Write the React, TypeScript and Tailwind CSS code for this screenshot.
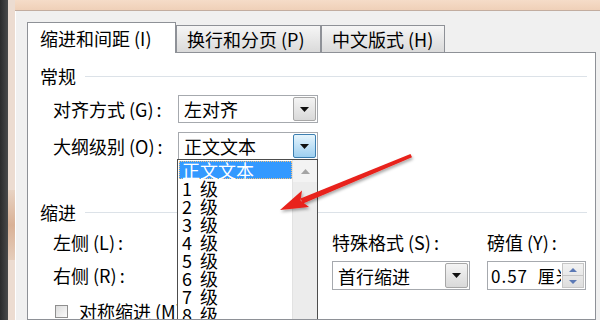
import type { ReactNode } from "react"

const FONT = "font-['Noto_Sans_CJK_SC','Noto_Sans',sans-serif]"

function Hot({ text, k, colon = true }: { text: string; k: string; colon?: boolean }) {
  return (
    <span className="whitespace-nowrap">
      {text}
      <span className="ml-[4px]">({k})</span>
      {colon && <span className="ml-[3px]">:</span>}
    </span>
  )
}

function Arrow({ focus = false }: { focus?: boolean }) {
  return (
    <div
      className={
        focus
          ? "m-px flex w-[23px] items-center justify-center rounded-[2px] border border-[#3c7fb1] bg-gradient-to-b from-[#e5f4fc] to-[#9dcff0]"
          : "m-px flex w-[23px] items-center justify-center rounded-[2px] border border-[#a7a7a7] bg-gradient-to-b from-[#f4f4f4] to-[#d9d9d9]"
      }
    >
      <svg width="9" height="5" viewBox="0 0 9 5">
        <path d="M0 0h9L4.5 5z" fill="#111" />
      </svg>
    </div>
  )
}

function Select({ value, w, focus }: { value: string; w: string; focus?: boolean }) {
  return (
    <div className={`flex h-[28px] ${w} border border-[#a6a9ae] bg-white`}>
      <div className="flex flex-1 items-center pl-[5px] text-[18px] leading-none">{value}</div>
      <Arrow focus={focus} />
    </div>
  )
}

function Group({ title, className = "" }: { title: string; className?: string }) {
  return (
    <div className={`flex h-[24px] items-center pl-[12px] pr-[8px] ${className}`}>
      <span className="text-[18px] leading-none">{title}</span>
      <div className="ml-[9px] h-px flex-1 bg-[#dce2e8]" />
    </div>
  )
}

function Tab({ children, active, w }: { children: ReactNode; active?: boolean; w: string }) {
  return (
    <div
      className={
        active
          ? `relative z-10 -mb-px flex h-[31px] ${w} items-center border border-b-0 border-[#8e9197] bg-white pl-[12px] text-[18px]`
          : `flex h-[27px] ${w} items-center border border-b-0 border-[#8e9197] bg-gradient-to-b from-[#f6f6f6] to-[#dadada] pl-[10px] text-[18px]`
      }
    >
      {children}
    </div>
  )
}

const LEVELS = ["1", "2", "3", "4", "5", "6", "7", "8", "9"]

export default function App() {
  return (
    <div className={`relative flex h-[320px] w-[600px] overflow-hidden bg-[#ecdcd0] text-black ${FONT}`}>
      {/* desktop edge */}
      <div className="w-[8px] shrink-0 bg-gradient-to-r from-[#2b2b2b] to-[#4a4a4a]" />
      <div className="flex w-[7px] shrink-0 flex-col bg-[#ecdcd1]">
        <div className="h-[190px] shrink-0" />
        <div className="h-[70px] shrink-0 bg-gradient-to-b from-[#e8d3c3] via-[#d9b196] to-[#e5cdbb]" />
      </div>

      <div className="flex min-h-0 flex-1 flex-col">
        <div className="h-[11px] shrink-0 border-b border-[#c2ada0] bg-gradient-to-b from-[#f5dcc8] to-[#efd0b8]" />

        {/* dialog */}
        <div className="flex min-h-0 flex-1 flex-col border-l border-white bg-[#f0f0f0] pl-[11px] pr-[4px] pt-[11px]">
          <div className="flex h-[30px] shrink-0 items-end">
            <Tab active w="w-[149px]">
              <Hot text="缩进和间距" k="I" colon={false} />
            </Tab>
            <Tab w="w-[145px]">
              <Hot text="换行和分页" k="P" colon={false} />
            </Tab>
            <Tab w="w-[124px]">
              <Hot text="中文版式" k="H" colon={false} />
            </Tab>
          </div>

          <div className="relative min-h-0 flex-1 overflow-hidden border border-[#8e9197] bg-white">
            <Group title="常规" className="mt-[11px]" />

            <div className="mt-[7px] flex items-center pl-[25px]">
              <div className="w-[125px] text-[18px] leading-none">
                <Hot text="对齐方式" k="G" />
              </div>
              <Select value="左对齐" w="w-[140px]" />
            </div>
            <div className="mt-[9px] flex items-center pl-[25px]">
              <div className="w-[125px] text-[18px] leading-none">
                <Hot text="大纲级别" k="O" />
              </div>
              <Select value="正文文本" w="w-[140px]" focus />
            </div>

            <Group title="缩进" className="mt-[40px]" />

            <div className="flex">
              <div className="flex w-[304px] flex-col pl-[25px] text-[18px] leading-none">
                <div className="mt-[6px] flex h-[24px] items-center">
                  <Hot text="左侧" k="L" />
                </div>
                <div className="mt-[9px] flex h-[24px] items-center">
                  <Hot text="右侧" k="R" />
                </div>
                <div className="mt-[14px] flex h-[20px] items-center">
                  <div className="ml-[2px] h-[13px] w-[13px] border border-[#8f8f8f] bg-gradient-to-br from-[#dcdcdc] to-[#fbfbfb]" />
                  <span className="ml-[11px]">
                    <Hot text="对称缩进" k="M" colon={false} />
                  </span>
                </div>
              </div>

              <div className="flex gap-[17px] text-[18px] leading-none">
                <div className="flex w-[138px] flex-col">
                  <div className="mt-[6px] flex h-[24px] items-center">
                    <Hot text="特殊格式" k="S" />
                  </div>
                  <div className="mt-[7px]">
                    <Select value="首行缩进" w="w-[138px] h-[29px]" />
                  </div>
                </div>
                <div className="flex w-[99px] flex-col">
                  <div className="mt-[6px] flex h-[24px] items-center">
                    <Hot text="磅值" k="Y" />
                  </div>
                  <div className="mt-[7px] flex h-[29px] border border-[#a6a9ae] bg-white">
                    <div className="flex w-0 flex-1 items-center overflow-hidden whitespace-nowrap pl-[3px] text-[17px] tracking-[1px]">
                      0.57&nbsp;&nbsp;厘米
                    </div>
                    <div className="m-px flex w-[22px] flex-col border border-[#c6c6c6] bg-gradient-to-b from-[#f2f2f2] to-[#dedede]">
                      <div className="flex flex-1 items-center justify-center border-b border-[#c6c6c6]">
                        <svg width="8" height="4" viewBox="0 0 8 4">
                          <path d="M0 4h8L4 0z" fill="#5b79b5" />
                        </svg>
                      </div>
                      <div className="flex flex-1 items-center justify-center">
                        <svg width="8" height="4" viewBox="0 0 8 4">
                          <path d="M0 0h8L4 4z" fill="#5b79b5" />
                        </svg>
                      </div>
                    </div>
                  </div>
                </div>
              </div>
            </div>

            {/* open dropdown list */}
            <div className="absolute left-[149px] top-[106px] z-20 flex h-[200px] w-[141px] border border-[#4d4d4d] bg-white text-[18px] leading-none">
              <div className="flex flex-1 flex-col pl-px pt-px">
                <div className="flex h-[18px] items-center border border-dotted border-[#f0c080] bg-[#3399ff] pl-[2px] text-white">
                  正文文本
                </div>
                {LEVELS.map((n) => (
                  <div key={n} className="flex h-[18px] items-center pl-[3px]">
                    <span className="w-[18px]">{n}</span>
                    <span>级</span>
                  </div>
                ))}
              </div>
              <div className="flex w-[25px] flex-col border-l border-[#e2e2e2] bg-[#ececec]">
                <div className="flex h-[22px] items-center justify-center bg-[#f3f3f3]">
                  <svg width="9" height="5" viewBox="0 0 9 5">
                    <path d="M0 5h9L4.5 0z" fill="#a4a4a4" />
                  </svg>
                </div>
              </div>
            </div>
          </div>
        </div>
      </div>

      {/* red annotation arrow */}
      <svg className="pointer-events-none absolute left-0 top-0 z-30" width="600" height="320" viewBox="0 0 600 320">
        <defs>
          <filter id="sh" x="-20%" y="-20%" width="140%" height="140%">
            <feDropShadow dx="1" dy="2" stdDeviation="1.5" floodColor="#000" floodOpacity="0.35" />
          </filter>
        </defs>
        <g filter="url(#sh)" fill="#e8201a">
          <path d="M410.5 154 L412 157.2 L303 203.5 L300.5 198.5 Z" />
          <path d="M280 210 L302 190.5 L300.5 200.5 L309 207 Z" />
        </g>
      </svg>
    </div>
  )
}
